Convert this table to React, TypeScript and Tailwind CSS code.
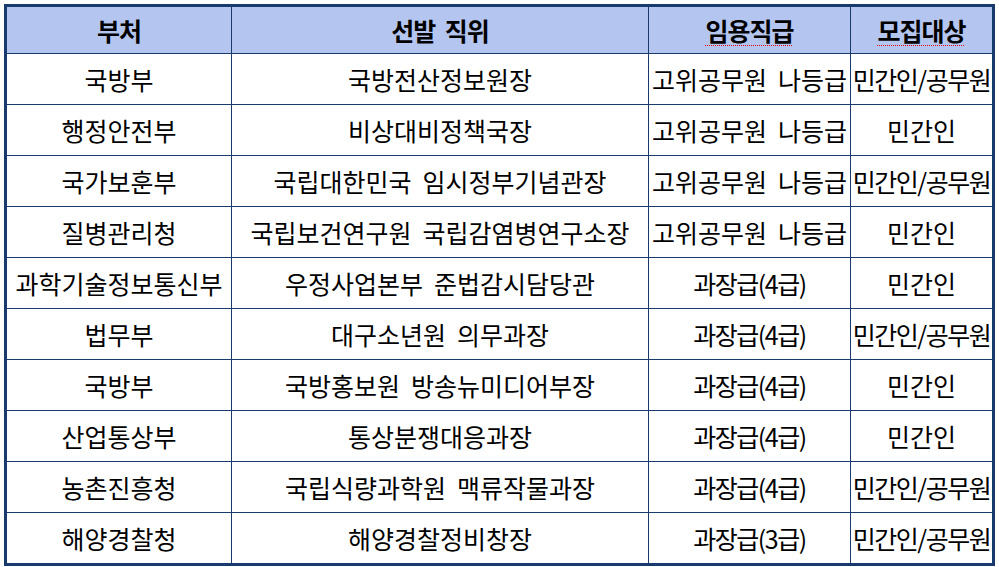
import { Fragment } from "react";

const rows: [string, string, string, string][] = [
  ["국방부", "국방전산정보원장", "고위공무원  나등급", "민간인/공무원"],
  ["행정안전부", "비상대비정책국장", "고위공무원  나등급", "민간인"],
  ["국가보훈부", "국립대한민국  임시정부기념관장", "고위공무원  나등급", "민간인/공무원"],
  ["질병관리청", "국립보건연구원  국립감염병연구소장", "고위공무원  나등급", "민간인"],
  ["과학기술정보통신부", "우정사업본부  준법감시담당관", "과장급(4급)", "민간인"],
  ["법무부", "대구소년원  의무과장", "과장급(4급)", "민간인/공무원"],
  ["국방부", "국방홍보원  방송뉴미디어부장", "과장급(4급)", "민간인"],
  ["산업통상부", "통상분쟁대응과장", "과장급(4급)", "민간인"],
  ["농촌진흥청", "국립식량과학원  맥류작물과장", "과장급(4급)", "민간인/공무원"],
  ["해양경찰청", "해양경찰정비창장", "과장급(3급)", "민간인/공무원"],
];

const cell =
  "flex items-center justify-center bg-white whitespace-pre text-black overflow-hidden";

const head =
  "flex items-center justify-center bg-[#b4c6f0] font-bold whitespace-pre tracking-[-1px]";

// latin glyphs in Noto run wider than the original font, so tighten those cells
const tight = (s: string) => (/[()/0-9]/.test(s) ? " tracking-[-1.5px]" : "");

export default function App() {
  return (
    <div
      className="w-[999px] h-[567px] bg-white p-1"
      style={{ fontFamily: '"Noto Sans CJK KR", "Noto Sans", sans-serif' }}
    >
      <div className="border-[3px] border-[#183a6c] bg-[#183a6c] grid grid-cols-[224px_416px_201px_minmax(0,1fr)] grid-rows-[46px_repeat(10,50px)] gap-px text-[25px] leading-none">
        {/* Header */}
        <div className={head}>부처</div>
        <div className={head}>선발  직위</div>
        <div className={head}>
          <span className="underline decoration-dotted decoration-red-600 decoration-1 underline-offset-[4px]">
            임용직급
          </span>
        </div>
        <div className={head}>
          <span className="underline decoration-dotted decoration-red-600 decoration-1 underline-offset-[4px]">
            모집대상
          </span>
        </div>

        {rows.map((r, i) => (
          <Fragment key={i}>
            <div className={cell}>{r[0]}</div>
            <div className={cell}>{r[1]}</div>
            <div className={cell + tight(r[2])}>{r[2]}</div>
            <div className={cell + tight(r[3])}>{r[3]}</div>
          </Fragment>
        ))}
      </div>
    </div>
  );
}
